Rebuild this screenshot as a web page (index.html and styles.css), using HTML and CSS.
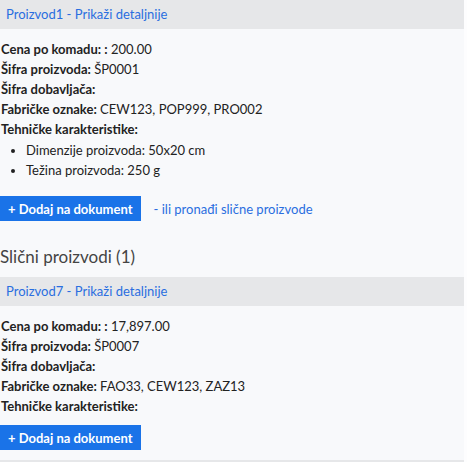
FILE: index.html
```html
<!DOCTYPE html>
<html lang="sr">
<head>
  <meta charset="UTF-8">
  <meta name="viewport" content="width=device-width, initial-scale=1.0">
  <title>Proizvodi</title>
  <link rel="stylesheet" href="styles.css">
</head>
<body>
  <div class="page">
    <div class="product">
      <div class="product-header"><a href="#">Proizvod1 - Prikaži detaljnije</a></div>
      <div class="product-body">
        <p><strong>Cena po komadu: :</strong> 200.00</p>
        <p><strong>Šifra proizvoda:</strong> ŠP0001</p>
        <p><strong>Šifra dobavljača:</strong></p>
        <p><strong>Fabričke oznake:</strong> CEW123, POP999, PRO002</p>
        <p><strong>Tehničke karakteristike:</strong></p>
        <ul class="specs">
          <li>Dimenzije proizvoda: 50x20 cm</li>
          <li>Težina proizvoda: 250 g</li>
        </ul>
        <div class="actions">
          <button class="add-btn">+ Dodaj na dokument</button>
          <a href="#" class="similar-link">- ili pronađi slične proizvode</a>
        </div>
      </div>
    </div>

    <h2 class="section-title">Slični proizvodi (1)</h2>

    <div class="product similar">
      <div class="product-header"><a href="#">Proizvod7 - Prikaži detaljnije</a></div>
      <div class="product-body">
        <p><strong>Cena po komadu: :</strong> 17,897.00</p>
        <p><strong>Šifra proizvoda:</strong> ŠP0007</p>
        <p><strong>Šifra dobavljača:</strong></p>
        <p><strong>Fabričke oznake:</strong> FAO33, CEW123, ZAZ13</p>
        <p><strong>Tehničke karakteristike:</strong></p>
        <div class="actions">
          <button class="add-btn">+ Dodaj na dokument</button>
        </div>
      </div>
    </div>
  </div>
</body>
</html>
```
FILE: styles.css
```css
body {
  font-family: Lato, "Liberation Sans", sans-serif;
  font-size: 13px;
  color: #222;
  background-color: #fdfdfe;
  margin: 0;
  padding: 0;
}
.page {
  width: 464px;
  background-color: #f8f9fb;
}
.product-header {
  background-color: #e6e7e9;
  height: 29px;
  line-height: 29px;
  padding-left: 6px;
  font-size: 13px;
}
.product-header a,
.similar-link {
  color: #2a6ee0;
  text-decoration: none;
}
.product-body {
  padding: 10px 0 10px 1px;
}
.similar {
  border-bottom: 2px solid #e6e7e9;
}
.product-body p {
  margin: 0;
  line-height: 20px;
}
.specs {
  margin: 1px 0 16px;
  padding-left: 25px;
  line-height: 20px;
}
.actions {
  display: flex;
  align-items: center;
  gap: 13px;
  margin-top: 9px;
}
.specs + .actions {
  margin-top: 0;
}
.add-btn {
  font-family: inherit;
  font-size: 13px;
  font-weight: 700;
  color: #fff;
  background-color: #1a73e8;
  border: none;
  height: 25px;
  padding: 0 8px;
  margin-left: -1px;
  cursor: pointer;
}
.section-title {
  font-size: 17px;
  font-weight: 400;
  color: #444;
  margin: 0;
  padding: 16px 0 10px;
  line-height: 20px;
}
```
